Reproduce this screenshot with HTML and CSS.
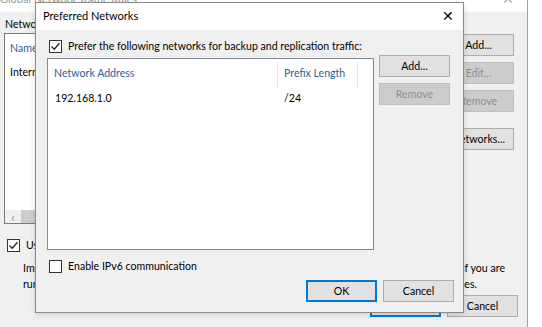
FILE: index.html
```html
<!DOCTYPE html>
<html lang="en">
<head>
    <meta charset="UTF-8">
    <title>Preferred Networks</title>
    <link rel="stylesheet" href="styles.css">
</head>
<body>

<!-- parent window, mostly covered by the dialog -->
<div class="window parent">
    <div class="win-title">
        <span>Global Network Traffic Rules</span>
        <span class="win-close dim">&#x2715;</span>
    </div>
    <div class="parent-body">
        <div class="label">Network traffic rules:</div>
        <div class="parent-main">
            <div class="listbox">
                <div class="lb-head">Name</div>
                <div class="lb-row">Internet</div>
                <div class="hscroll">
                    <span class="arrow">&lsaquo;</span>
                    <span class="thumb"></span>
                </div>
            </div>
            <div class="btn-col">
                <div class="btn">Add...</div>
                <div class="btn disabled">Edit...</div>
                <div class="btn disabled">Remove</div>
                <div class="btn wide">Networks...</div>
            </div>
        </div>
        <label class="check-row">
            <span class="check on"><svg width="11" height="11" viewBox="0 0 11 11"><path d="M1.5 5.5 L4.2 8.2 L9.5 2.2" fill="none" stroke="#222" stroke-width="1.3"/></svg></span>
            <span>Use multiple upload streams per job</span>
        </label>
        <div class="note">
            <div class="note-line l1"><span>Improves performance for long distance links.</span><span>Enable this option if you are</span></div>
            <div class="note-line l2"><span>running jobs across WAN links with high</span><span>latency or slow lines.</span></div>
        </div>
        <div class="btn-row">
            <div class="btn default">OK</div>
            <div class="btn">Cancel</div>
        </div>
    </div>
</div>

<!-- modal dialog -->
<div class="window dialog">
    <div class="win-title">
        <span>Preferred Networks</span>
        <span class="win-close">&#x2715;</span>
    </div>
    <div class="dlg-body">
        <label class="check-row first">
            <span class="check on"><svg width="11" height="11" viewBox="0 0 11 11"><path d="M1.5 5.5 L4.2 8.2 L9.5 2.2" fill="none" stroke="#222" stroke-width="1.3"/></svg></span>
            <span>Prefer the following networks for backup and replication traffic:</span>
        </label>
        <div class="dlg-main">
            <div class="listview">
                <div class="lv-head">
                    <div class="col c1">Network Address</div>
                    <div class="col c2">Prefix Length</div>
                    <div class="col c3"></div>
                </div>
                <div class="lv-row">
                    <div class="col c1">192.168.1.0</div>
                    <div class="col c2">/24</div>
                </div>
            </div>
            <div class="btn-col">
                <div class="btn">Add...</div>
                <div class="btn disabled">Remove</div>
            </div>
        </div>
        <label class="check-row ipv6">
            <span class="check"></span>
            <span>Enable IPv6 communication</span>
        </label>
        <div class="btn-row">
            <div class="btn default">OK</div>
            <div class="btn">Cancel</div>
        </div>
    </div>
</div>

</body>
</html>
```
FILE: styles.css
```css
html,body{
    height: 100%;
}
body{
    margin: 0;
    background: #fff;
    font-family: Lato, "Noto Sans", sans-serif;
    font-size: 10.6px;
    color: #000;
    overflow: hidden;
    position: relative;
}

.window{
    position: absolute;
    background: #f0f0f0;
    box-sizing: border-box;
}

.win-title{
    height: 27px;
    background: #fff;
    display: flex;
    align-items: center;
    justify-content: space-between;
    padding: 0 0 3px 7px;
    box-sizing: border-box;
    font-size: 11px;
}

.win-close{
    width: 30px;
    text-align: center;
    font-size: 14px;
}
.win-close.dim{
    color: #aaa;
}

/* parent window */
.parent{
    left: 0;
    top: -15px;
    width: 528px;
    height: 345px;
    border-right: 1px solid #a3a3a3;
}
.parent .win-title{
    color: #9a9a9a;
    padding: 0 4px 0 0;
}
.parent-body{
    padding: 4px 0 0 4px;
}
.label{
    line-height: 16px;
    margin-left: 1px;
}
.parent-main{
    display: flex;
    gap: 10px;
    margin-top: 1px;
}
.listbox{
    width: 429px;
    height: 191px;
    box-sizing: border-box;
    background: #fff;
    border: 1px solid #7a7a7a;
    position: relative;
    padding: 6px 0 0 5px;
}
.lb-head{
    color: #2c5f98;
    line-height: 16px;
}
.lb-row{
    line-height: 16px;
    margin-top: 8px;
}
.hscroll{
    position: absolute;
    left: 0;
    right: 0;
    bottom: 0;
    height: 13px;
    background: #f0f0f0;
    display: flex;
    align-items: center;
}
.arrow{
    width: 16px;
    text-align: center;
    color: #999;
    font-size: 14px;
}
.thumb{
    width: 60px;
    height: 13px;
    background: #cdcdcd;
}
.parent .btn-col{
    gap: 6px;
    padding-top: 1px;
}
.parent .btn-col .btn:nth-child(4){
    margin-top: 10px;
}
.parent .check-row{
    margin: 13px 0 0 3px;
}
.note{
    margin: 7px 0 0 19px;
    line-height: 16px;
    white-space: nowrap;
}
.note-line{
    display: flex;
    justify-content: space-between;
}
.note-line.l1{
    width: 482px;
}
.note-line.l2{
    width: 454px;
}
.parent .btn-row{
    margin: 3px 0 0 366px;
}

/* buttons */
.btn-col{
    display: flex;
    flex-direction: column;
    gap: 6px;
}
.btn{
    width: 71px;
    height: 22px;
    box-sizing: border-box;
    background: #e1e1e1;
    border: 1px solid #adadad;
    text-align: center;
    line-height: 20px;
}
.btn.disabled{
    background: #cccccc;
    border-color: #bfbfbf;
    color: #8c8c8c;
}
.btn.default{
    border: 2px solid #0078d7;
    line-height: 18px;
}
.btn-row{
    display: flex;
    gap: 6px;
}

/* checkboxes */
.check-row{
    display: flex;
    align-items: center;
    gap: 6px;
    line-height: 16px;
}
.check{
    width: 13px;
    height: 13px;
    box-sizing: border-box;
    border: 1px solid #333;
    background: #fff;
    display: flex;
    align-items: center;
    justify-content: center;
}

/* dialog */
.dialog{
    left: 35px;
    top: 2px;
    width: 429px;
    height: 311px;
    border: 1px solid #8a8a8a;
    box-shadow: 0 2px 6px rgba(0,0,0,0.12);
}
.dialog .win-title{
    padding-right: 0;
}
.dlg-body{
    padding: 8px 9px 0 11px;
}
.check-row.first{
    margin-left: 2px;
}
.dlg-main{
    display: flex;
    gap: 5px;
    margin-top: 4px;
}
.listview{
    width: 327px;
    height: 192px;
    box-sizing: border-box;
    background: #fff;
    border: 1px solid #828790;
}
.lv-head{
    display: flex;
    height: 25px;
    margin-top: 3px;
    color: #2c5f98;
}
.lv-row{
    display: flex;
    line-height: 16px;
}
.col{
    box-sizing: border-box;
    padding-left: 6px;
    line-height: 22px;
    white-space: nowrap;
}
.lv-row .col{
    padding-left: 7px;
}
.c1{
    width: 229px;
}
.c2{
    width: 80px;
}
.lv-head .c2,
.lv-head .c3{
    border-left: 1px solid #e5e5e5;
}
.lv-head .c3{
    width: 16px;
}
.dialog .btn-col{
    margin-top: -3px;
}
.check-row.ipv6{
    margin: 8px 0 0 2px;
}
.dialog .btn-row{
    justify-content: flex-end;
    margin-top: 6px;
}
```
